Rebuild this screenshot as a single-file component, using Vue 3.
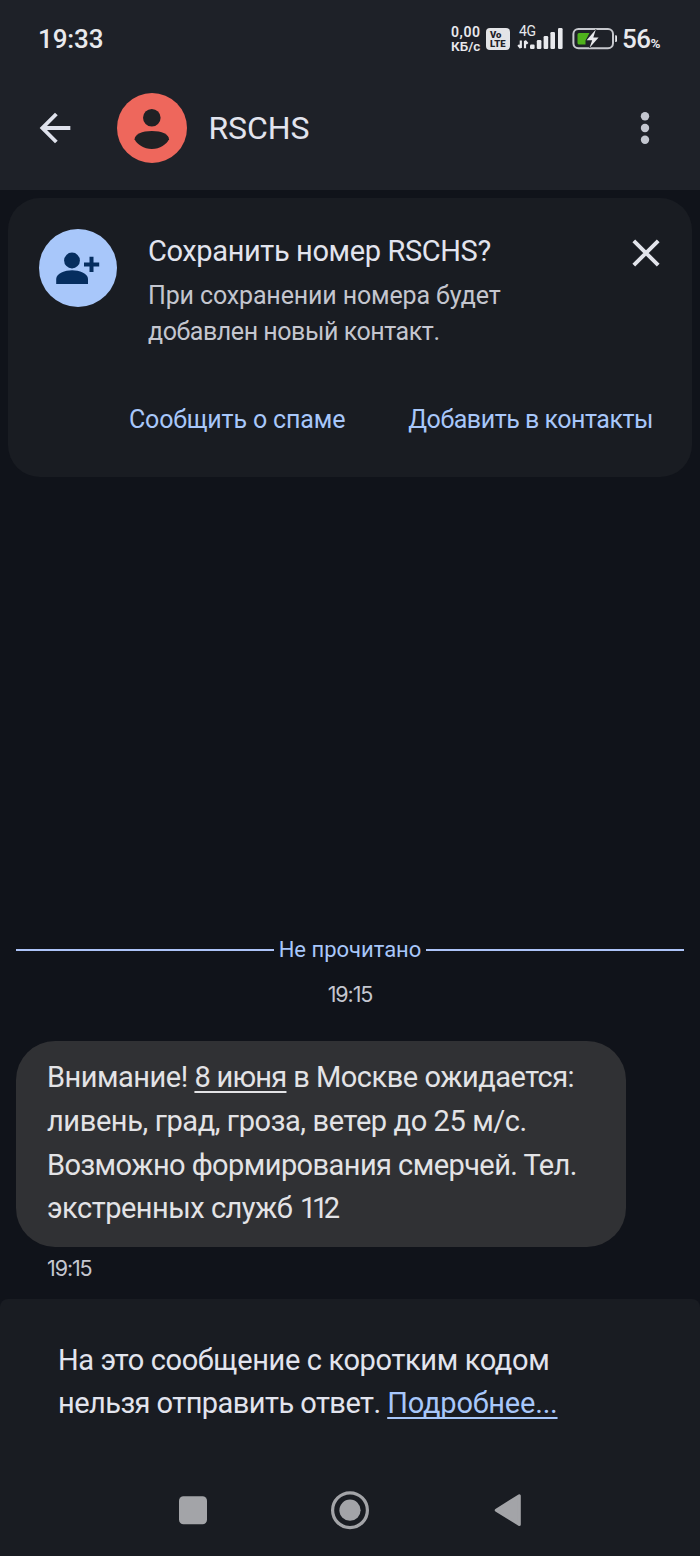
<script setup>
const signalBars = [
  { x: 0, h: 4.5 },
  { x: 6.8, h: 9 },
  { x: 13.6, h: 13 },
  { x: 20.4, h: 17 },
  { x: 28, h: 21 }
]
</script>

<template>
  <div class="screen">
    <header class="top">
      <div class="status">
        <span class="clock">19:33</span>
        <div class="indicators">
          <div class="speed"><span>0,00</span><span class="unit">КБ/с</span></div>
          <div class="volte"><span>Vo</span><span>LTE</span></div>
          <div class="signal">
            <span class="net">4G</span>
            <svg width="46" height="23" viewBox="-13 0 46 23">
              <path d="M-9.2 13.5v7.5M-11.8 18l2.6 3M-5 21.3v-7.5M-2.4 16.8l-2.600-3" fill="none" stroke="#e8e9ed" stroke-width="2.200" />
              <rect v-for="b in signalBars" :key="b.x" :x="b.x" :y="22 - b.h" width="4.600" :height="b.h" rx="1.200" fill="#e8e9ed" />
            </svg>
          </div>
          <svg class="battery" width="46" height="24" viewBox="0 0 46 24">
            <rect x="1.400" y="2" width="39.600" height="19.200" rx="5" fill="none" stroke="#c6c8cd" stroke-width="2" />
            <path d="M43.200 8.200h.6q1.200 0 1.200 1.200v4.400q0 1.200-1.200 1.200h-.6z" fill="#e8e9ed" />
            <path d="M7 6h10.500L13.500 13.500V17.500H7q-1.500 0-1.500-1.500V7.500Q5.500 6 7 6z" fill="#4fb21c" />
            <path d="M23.800 2.500L14.600 13.300h5.600L17.400 21 26.600 10.600H21.300z" fill="#e8e9ed" stroke="#1e2128" stroke-width="1" paint-order="stroke" />
          </svg>
          <span class="level">56<small>%</small></span>
        </div>
      </div>
      <div class="appbar">
        <svg class="back" width="46" height="46" viewBox="0 0 24 24">
          <path d="M20 11H7.830l5.590-5.590L12 4l-8 8 8 8 1.410-1.410L7.830 13H20z" fill="#dfe2ec" />
        </svg>
        <svg class="avatar" width="70" height="70" viewBox="0 0 70 70">
          <circle cx="35" cy="35" r="35" fill="#ee675c" />
          <circle cx="34.800" cy="24.700" r="8.800" fill="#202124" />
          <path d="M17.600 46.300C17.600 41.500 25 38 34.900 38S52 41.500 52 46.300C49.500 51.500 43 56 34.900 56S20 51.500 17.600 46.300z" fill="#202124" />
        </svg>
        <h1>RSCHS</h1>
        <svg class="more" width="12" height="34" viewBox="0 0 12 34">
          <circle cx="6" cy="5.300" r="4.200" /><circle cx="6" cy="17" r="4.200" /><circle cx="6" cy="28.700" r="4.200" />
        </svg>
      </div>
    </header>

    <section class="card">
      <div class="info">
        <svg class="add" width="78" height="78" viewBox="0 0 78 78">
          <circle cx="39" cy="39" r="39" fill="#a8c7fa" />
          <circle cx="33" cy="31.500" r="7.900" fill="#062e5f" />
          <path d="M17.200 55V50c0-6 9-8.800 15.900-8.800S49 44 49 50v5z" fill="#062e5f" />
          <path d="M52.500 27.700v15.400M45 35.400h15.200" stroke="#062e5f" stroke-width="4" />
        </svg>
        <div class="copy">
          <h2>Сохранить номер RSCHS?</h2>
          <p class="d1">При сохранении номера будет</p>
          <p class="d2">добавлен новый контакт.</p>
        </div>
        <svg class="close" width="28" height="28" viewBox="0 0 28 28">
          <path d="M1.800 1.800l24.400 24.400M26.200 1.800L1.800 26.200" stroke="#e2e4eb" stroke-width="3.900" />
        </svg>
      </div>
      <div class="actions">
        <a class="spam">Сообщить о спаме</a>
        <a class="contact">Добавить в контакты</a>
      </div>
    </section>

    <main class="thread">
      <div class="unread"><span>Не прочитано</span></div>
      <div class="time center">19:15</div>
      <div class="bubble">
        <div class="m1">Внимание! <u>8 июня</u> в Москве ожидается:</div>
        <div class="m2">ливень, град, гроза, ветер до 25 м/с.</div>
        <div class="m3">Возможно формирования смерчей. Тел.</div>
        <div class="m4">экстренных служб <span>112</span></div>
      </div>
      <div class="time sent">19:15</div>
    </main>

    <footer class="bottom">
      <div class="f1">На это сообщение с коротким кодом</div>
      <div class="f2">нельзя отправить ответ. <a>Подробнее...</a></div>
      <nav>
        <svg width="40" height="40" viewBox="0 0 40 40"><rect x="6" y="6.200" width="28" height="28" rx="4.500" fill="#a3a4a8" /></svg>
        <svg width="40" height="40" viewBox="0 0 40 40">
          <circle cx="20" cy="20.200" r="17.400" fill="none" stroke="#a3a4a8" stroke-width="3.200" />
          <circle cx="20" cy="20.200" r="10.600" fill="#a3a4a8" />
        </svg>
        <svg width="40" height="40" viewBox="0 0 40 40"><path d="M8.200 20.200L31.300 5.800V34.600z" fill="#a3a4a8" stroke="#a3a4a8" stroke-width="3" stroke-linejoin="round" /></svg>
      </nav>
    </footer>
  </div>
</template>

<style>
body { background: #10131a; }
</style>

<style scoped>
* { box-sizing: border-box; margin: 0; }
.screen {
  width: 700px;
  height: 1556px;
  display: flex;
  flex-direction: column;
  background: #10131a;
  color: #e2e2e9;
  font-family: Roboto, "Noto Sans", sans-serif;
  white-space: nowrap;
  overflow: hidden;
}
svg { display: block; flex: none; }

.top { height: 190px; background: #1e2128; flex: none; }
.status {
  height: 77px;
  padding: 0 37px 0 38px;
  display: flex;
  justify-content: space-between;
  align-items: center;
  color: #e8e9ed;
}
.clock { font-size: 26px; font-weight: 500; letter-spacing: -.1px; }
.indicators { display: flex; align-items: center; height: 34px; }
.speed {
  width: 30px;
  margin-right: 5px;
  display: flex;
  flex-direction: column;
  font-size: 14px;
  font-weight: 600;
  line-height: 14px;
  letter-spacing: .6px;
}
.speed .unit { font-size: 13.5px; letter-spacing: 0; }
.volte {
  width: 24px;
  height: 22px;
  margin-right: 7px;
  padding: 2px 0 0 4px;
  border-radius: 4px;
  background: #e3e4e7;
  color: #1e2128;
  display: flex;
  flex-direction: column;
  font-size: 9.5px;
  font-weight: 900;
  line-height: 9px;
}
.signal { position: relative; width: 46px; height: 23px; margin-right: 9px; }
.net { position: absolute; left: 2px; top: -4px; font-size: 14px; line-height: 16px; letter-spacing: -.4px; }
.battery { margin-right: 4px; }
.level { width: 41px; font-size: 26px; font-weight: 500; letter-spacing: -.5px; }
.level small { font-size: 13.5px; font-weight: 700; letter-spacing: 0; }

.appbar { height: 102px; padding: 0 49px 0 32px; display: flex; align-items: center; }
.avatar { margin-left: 38.5px; }
.appbar h1 { margin-left: 22px; font-size: 32px; font-weight: 400; line-height: 40px; letter-spacing: -.1px; color: #e2e4ee; }
.more { margin-left: auto; fill: #c3c6cf; }

.card {
  height: 279px;
  margin: 8px 8px 0;
  flex: none;
  border-radius: 32px;
  background: #191c22;
}
.info { display: flex; padding: 31px 32.5px 0 31px; height: 207px; }
.copy { flex: 1; padding-top: 4px; margin-left: 31px; }
.copy h2 { font-size: 29px; font-weight: 400; line-height: 36px; letter-spacing: -.38px; color: #e2e4ee; }
.copy p { font-size: 25px; line-height: 36px; color: #c4c6cf; }
.copy .d1 { margin-top: 9px; letter-spacing: -.14px; }
.copy .d2 { letter-spacing: -.45px; }
.close { margin-top: 10px; }
.actions {
  display: flex;
  justify-content: flex-end;
  gap: 63px;
  padding-right: 39px;
  font-size: 25px;
  line-height: 30px;
  color: #a8c7fa;
}
.spam { letter-spacing: -.15px; }
.contact { letter-spacing: -.48px; }

.thread { flex: 1; display: flex; flex-direction: column; padding: 460px 16px 0; }
.unread {
  height: 26px;
  display: flex;
  align-items: center;
  gap: 5px;
  font-size: 22px;
  line-height: 26px;
  color: #a8c7fa;
}
.unread::before, .unread::after { content: ""; flex: 1; height: 2px; background: #adc4f8; }
.time { font-family: Inter, Roboto, sans-serif; font-size: 21.5px; line-height: 26px; letter-spacing: -1.1px; color: #c4c6cf; }
.center { text-align: center; margin-top: 18px; }
.bubble {
  width: 610px;
  height: 206px;
  margin-top: 34px;
  padding: 15px 31px 0;
  border-radius: 39px;
  background: #303134;
  color: #e3e3e6;
  font-size: 29px;
  line-height: 43.8px;
}
.bubble u, .f2 a {
  text-decoration: underline;
  text-decoration-thickness: 2px;
  text-underline-offset: 4px;
  text-decoration-skip-ink: none;
}
.bubble u { letter-spacing: -.75px; }
.m1 { letter-spacing: -.49px; }
.m2 { letter-spacing: -.4px; }
.m3 { letter-spacing: -.57px; }
.m4 { letter-spacing: -.5px; }
.m4 span { letter-spacing: -4.4px; margin-left: 1px; }
.sent { margin: 7.5px 0 0 31px; }

.bottom {
  height: 257px;
  flex: none;
  padding: 39.5px 58px 0;
  border-radius: 8px 8px 0 0;
  background: #191c22;
  color: #e2e4ee;
  font-size: 29px;
  line-height: 43.8px;
}
.f1 { letter-spacing: -.36px; }
.f2 { letter-spacing: -.55px; }
.f2 a { color: #a8c7fa; letter-spacing: -.2px; }
nav { display: flex; justify-content: center; gap: 117.5px; margin-top: 63.5px; }
</style>
